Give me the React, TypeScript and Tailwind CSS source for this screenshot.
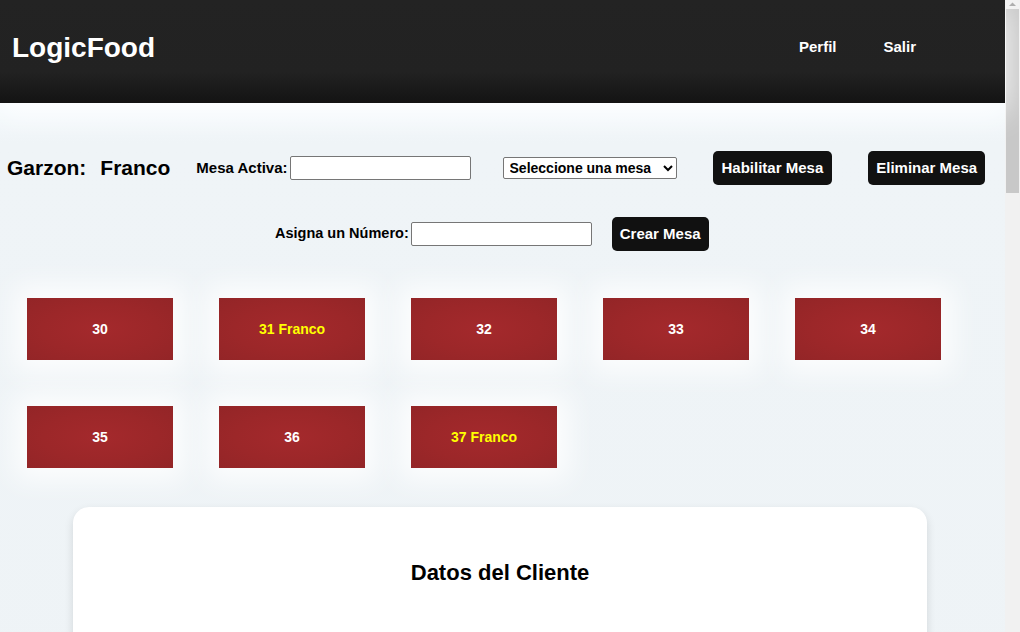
import React from "react";

const font = { fontFamily: '"Liberation Sans", Arial, sans-serif' };

function Tile({ n, name }: { n: number; name?: string }) {
  return (
    <div className="w-[146px] h-[62px] flex items-center justify-center bg-[radial-gradient(ellipse_at_center,#a4292c_0%,#9c2729_55%,#932527_100%)] shadow-[0_0_28px_12px_rgba(255,255,255,0.85)]">
      <span className={`text-[14px] font-bold ${name ? "text-[#ffff00]" : "text-white"}`}>
        {n}
        {name ? ` ${name}` : ""}
      </span>
    </div>
  );
}

export default function App() {
  return (
    <div style={font} className="h-[632px] flex overflow-hidden text-black">
      <div className="w-[1005px] shrink-0 bg-[#eef3f6]">
        <header className="h-[103px] flex items-center pb-[8px] bg-[linear-gradient(to_bottom,#232323_0%,#222222_70%,#131313_100%)] shadow-[0_8px_30px_rgba(255,255,255,0.95)] relative z-10">
          <div className="pl-[12px] text-[28px] font-bold text-white leading-none">LogicFood</div>
          <nav className="ml-auto flex items-center pr-[89px]">
            <a className="text-[15px] font-bold text-white">Perfil</a>
            <a className="ml-[47px] text-[15px] font-bold text-white">Salir</a>
          </nav>
        </header>

        <main className="bg-[linear-gradient(to_bottom,#f6fbfe_0px,#eff4f7_40px,#eef3f6_100%)]">
          <div className="pt-[48px] flex items-center h-[82px] pl-[7px]">
            <span className="text-[21px] font-bold">Garzon:</span>
            <span className="ml-[14px] text-[21px] font-bold">Franco</span>
            <label className="ml-[26px] text-[15px] font-bold">Mesa Activa:</label>
            <input type="text" className="ml-[2px] w-[181px] h-[24px] bg-white border border-[#767676] rounded-[2px]" />
            <select className="ml-[32px] w-[174px] h-[22px] bg-white border border-[#767676] rounded-[2px] text-[14px] font-bold pl-[2px]" style={font}>
              <option>Seleccione una mesa</option>
            </select>
            <button className="ml-[36px] h-[34px] px-[9px] rounded-[5px] bg-[#111111] text-white text-[15px] font-bold">Habilitar Mesa</button>
            <button className="ml-[36px] h-[34px] px-[8px] rounded-[5px] bg-[#111111] text-white text-[15px] font-bold">Eliminar Mesa</button>
          </div>

          <div className="mt-[32px] flex items-center h-[34px] pl-[275px]">
            <label className="text-[14.5px] font-bold">Asigna un Número:</label>
            <input type="text" className="ml-[2px] w-[181px] h-[24px] bg-white border border-[#767676] rounded-[2px]" />
            <button className="ml-[20px] h-[34px] px-[8px] rounded-[5px] bg-[#111111] text-white text-[15px] font-bold">Crear Mesa</button>
          </div>

          <div className="mt-[47px] pl-[27px] flex flex-wrap gap-x-[46px] gap-y-[46px]">
            <Tile n={30} />
            <Tile n={31} name="Franco" />
            <Tile n={32} />
            <Tile n={33} />
            <Tile n={34} />
            <Tile n={35} />
            <Tile n={36} />
            <Tile n={37} name="Franco" />
          </div>

          <section className="mt-[39px] ml-[73px] w-[854px] h-[360px] bg-white rounded-[16px] shadow-[0_4px_10px_rgba(0,0,0,0.12)] pt-[49px]">
            <h2 className="text-center text-[22px] font-bold">Datos del Cliente</h2>
          </section>
        </main>
      </div>

      <div className="w-[15px] shrink-0 bg-[#f1f1f1] flex flex-col items-center">
        <svg width="15" height="9" viewBox="0 0 15 9" className="shrink-0">
          <path d="M4 6 L7.5 2.5 L11 6 Z" fill="#a3a3a3" />
        </svg>
        <div className="w-[13px] h-[184px] bg-[#c8c8c8]" />
      </div>
    </div>
  );
}
